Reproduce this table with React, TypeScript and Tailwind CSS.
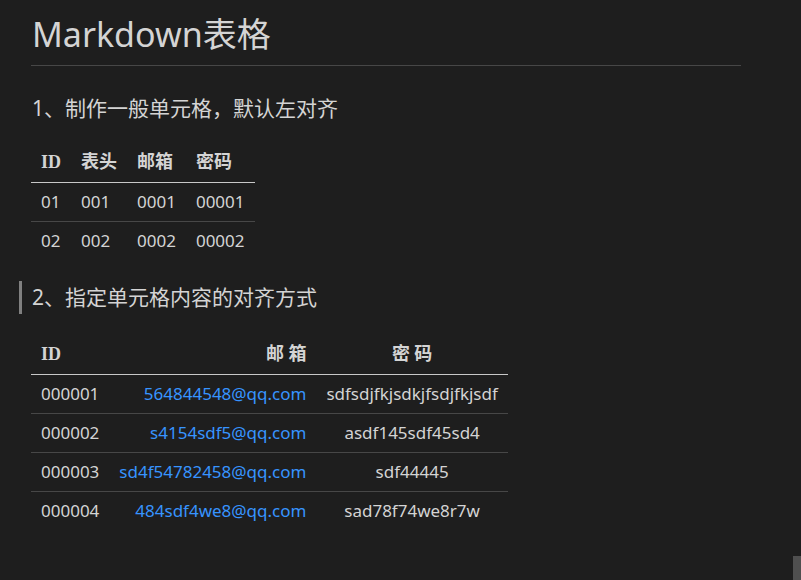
import React from 'react';

const rows1 = [
  ['01', '001', '0001', '00001'],
  ['02', '002', '0002', '00002'],
];

const rows2 = [
  ['000001', '564844548@qq.com', 'sdfsdjfkjsdkjfsdjfkjsdf'],
  ['000002', 's4154sdf5@qq.com', 'asdf145sdf45sd4'],
  ['000003', 'sd4f54782458@qq.com', 'sdf44445'],
  ['000004', '484sdf4we8@qq.com', 'sad78f74we8r7w'],
];

const head = "font-bold text-[#d4d4d4] [font-family:'Liberation_Serif','Noto_Sans_CJK_SC',serif]";

export default function App() {
  return (
    <div className="relative h-[580px] w-[801px] overflow-hidden bg-[#1e1e1e] text-[#d4d4d4] [font-family:'Noto_Sans','Noto_Sans_CJK_SC',sans-serif]">
      <div className="w-[741px] pl-[31px]">
        <h1 className="mt-[11px] h-[55px] border-b border-[#474747] pl-px text-[34px] leading-[46px] text-[#d4d4d4]">
          Markdown表格
        </h1>

        <h3 className="mt-[27px] h-[30px] pl-px text-[21px] leading-[30px]">1、制作一般单元格，默认左对齐</h3>

        <table className="mt-[20px] border-collapse text-[17px]">
          <thead>
            <tr className="h-[39px] border-b border-[#c8c8c8]">
              {['ID', '表头', '邮箱', '密码'].map((h) => (
                <th key={h} className={`px-[10px] text-left text-[18px] ${head}`}>
                  {h}
                </th>
              ))}
            </tr>
          </thead>
          <tbody>
            {rows1.map((r, i) => (
              <tr key={i} className={`h-[39px] ${i < rows1.length - 1 ? 'border-b border-[#474747]' : ''}`}>
                {r.map((c, j) => (
                  <td key={j} className="px-[10px]">
                    {c}
                  </td>
                ))}
              </tr>
            ))}
          </tbody>
        </table>

        <h3 className="-ml-[12px] mt-[21px] flex h-[33px] items-center border-l-[3px] border-[#808080] pl-[10px] text-[21px]">
          2、指定单元格内容的对齐方式
        </h3>

        <table className="mt-[21px] border-collapse text-[17px]">
          <thead>
            <tr className="h-[39px] border-b border-[#c8c8c8]">
              <th className={`px-[10px] text-left text-[18px] ${head}`}>ID</th>
              <th className={`px-[10px] text-right text-[18px] ${head}`}>邮 箱</th>
              <th className={`px-[10px] text-center text-[18px] ${head}`}>密 码</th>
            </tr>
          </thead>
          <tbody>
            {rows2.map((r, i) => (
              <tr key={i} className={`h-[39px] ${i < rows2.length - 1 ? 'border-b border-[#474747]' : ''}`}>
                <td className="px-[10px] text-left">{r[0]}</td>
                <td className="px-[10px] text-right text-[#3794ff]">{r[1]}</td>
                <td className="px-[10px] text-center">{r[2]}</td>
              </tr>
            ))}
          </tbody>
        </table>
      </div>

      <div className="absolute bottom-0 right-0 h-[24px] w-[8px] bg-[#4f4f4f]" />
    </div>
  );
}
